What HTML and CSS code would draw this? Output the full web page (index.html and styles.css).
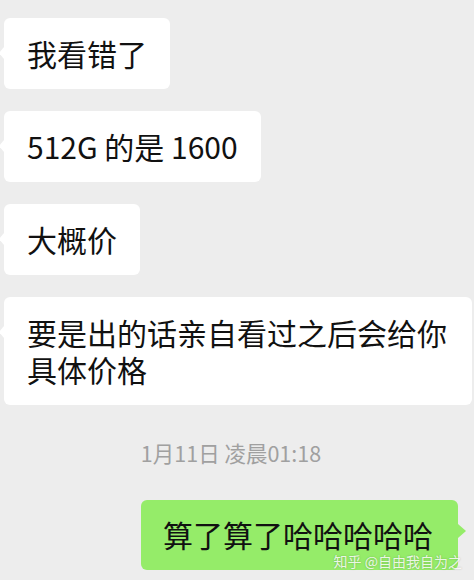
FILE: index.html
```html
<!DOCTYPE html>
<html lang="zh-CN">
<head>
    <meta charset="UTF-8">
    <meta name="viewport" content="width=device-width, initial-scale=1.0">
    <title>聊天</title>
    <link rel="stylesheet" href="styles.css">
</head>
<body>
    <div class="chat">
        <div class="msg msg-left">我看错了</div>
        <div class="msg msg-left">512G 的是 1600</div>
        <div class="msg msg-left">大概价</div>
        <div class="msg msg-left">要是出的话亲自看过之后会给你具体价格</div>
        <div class="time">1月11日 凌晨01:18</div>
        <div class="msg msg-right">算了算了哈哈哈哈哈</div>
    </div>
    <div class="watermark">知乎 @自由我自为之</div>
</body>
</html>
```
FILE: styles.css
```css
body {
    margin: 0;
    height: 580px;
    overflow: hidden;
    background-color: #ededed;
    font-family: "Noto Sans CJK SC", "Noto Sans", sans-serif;
    color: #111111;
    position: relative;
}
.chat {
    display: flex;
    flex-direction: column;
    gap: 22px;
    padding-top: 18px;
}
.msg {
    position: relative;
    box-sizing: border-box;
    max-width: 468px;
    padding: 17px 23px;
    font-size: 30px;
    line-height: 37px;
    border-radius: 6px;
}
.msg-left {
    align-self: flex-start;
    margin-left: 4px;
    background-color: #ffffff;
}
.msg-left::before {
    content: "";
    position: absolute;
    left: -5px;
    top: 29px;
    border-top: 6px solid transparent;
    border-bottom: 6px solid transparent;
    border-right: 5px solid #ffffff;
}
.msg-right {
    align-self: flex-end;
    margin-right: 16px;
    padding: 16px 25px 17px 22px;
    background-color: #95ec69;
}
.msg-right::after {
    content: "";
    position: absolute;
    right: -8px;
    top: 24px;
    border-top: 7px solid transparent;
    border-bottom: 7px solid transparent;
    border-left: 8px solid #95ec69;
}
.time {
    align-self: center;
    margin: 12px 12px 11px 0;
    font-size: 21.5px;
    line-height: 28px;
    color: #a0a0a0;
}
.watermark {
    position: absolute;
    right: 12px;
    bottom: 10px;
    font-size: 14px;
    line-height: 18px;
    color: rgba(255, 255, 255, 0.85);
    text-shadow: 0 0 2px rgba(0, 0, 0, 0.25);
}
```
